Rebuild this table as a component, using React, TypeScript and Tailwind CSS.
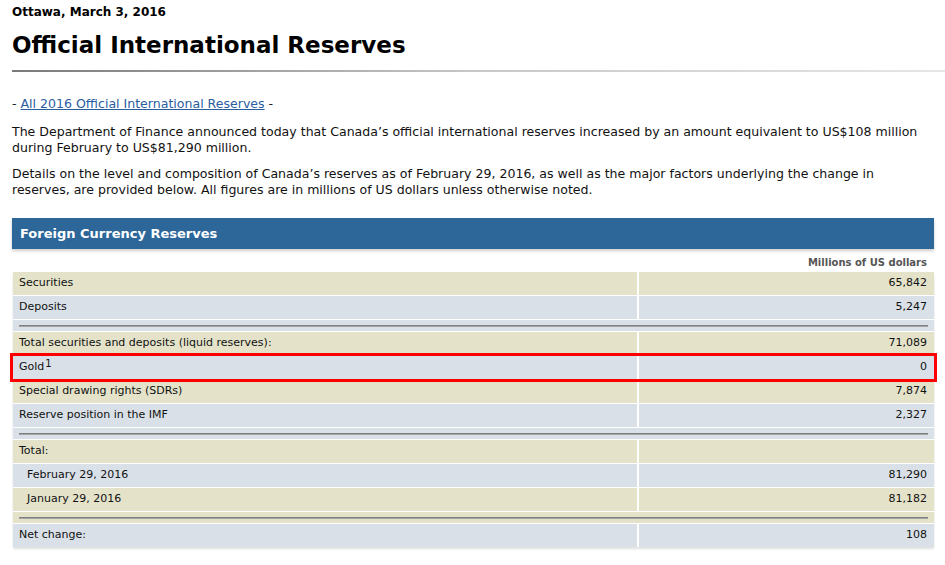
type Row = {
  label: React.ReactNode;
  value?: string;
  tone: 'olive' | 'blue';
  indent?: boolean;
  highlight?: boolean;
};

type Sep = { sep: true; tone: 'olive' | 'blue' };

const rows: (Row | Sep)[] = [
  { label: 'Securities', value: '65,842', tone: 'olive' },
  { label: 'Deposits', value: '5,247', tone: 'blue' },
  { sep: true, tone: 'blue' },
  { label: 'Total securities and deposits (liquid reserves):', value: '71,089', tone: 'olive' },
  {
    label: (
      <>
        Gold<sup className="relative -top-[4px] ml-px text-[10px]">1</sup>
      </>
    ),
    value: '0',
    tone: 'blue',
    highlight: true,
  },
  { label: 'Special drawing rights (SDRs)', value: '7,874', tone: 'olive' },
  { label: 'Reserve position in the IMF', value: '2,327', tone: 'blue' },
  { sep: true, tone: 'blue' },
  { label: 'Total:', value: '', tone: 'olive' },
  { label: 'February 29, 2016', value: '81,290', tone: 'blue', indent: true },
  { label: 'January 29, 2016', value: '81,182', tone: 'olive', indent: true },
  { sep: true, tone: 'olive' },
  { label: 'Net change:', value: '108', tone: 'blue' },
];

const toneClass = {
  olive: 'bg-[#e4e3ca]',
  blue: 'bg-[#d9e0e7]',
};

function TableRow({ row }: { row: Row | Sep }) {
  if ('sep' in row) {
    return (
      <div className={`flex h-[11px] items-center px-[6px] ${toneClass[row.tone]}`}>
        <div className="h-[2px] w-full bg-gradient-to-b from-[#6f6f6f] to-[#b5b5b5]" />
      </div>
    );
  }
  return (
    <div
      className={`flex h-[23px] gap-[2px] ${
        row.highlight ? 'relative z-10 outline-[3px] outline-[#f00] outline-solid' : ''
      }`}
    >
      <div
        className={`flex w-[624px] items-center ${row.indent ? 'pl-[14px]' : 'pl-[6px]'} ${toneClass[row.tone]}`}
      >
        {row.label}
      </div>
      <div className={`flex flex-1 items-center justify-end pr-[7px] ${toneClass[row.tone]}`}>
        {row.value}
      </div>
    </div>
  );
}

export default function App() {
  return (
    <div className="min-h-[565px] w-[945px] bg-white px-[12px] text-black [font-family:'DejaVu_Sans',Verdana,sans-serif]">
      <div className="pt-[4px] text-[12px] font-bold leading-[17px]">Ottawa, March 3, 2016</div>
      <h1 className="mt-[10px] text-[23px] font-bold leading-[28px]">Official International Reserves</h1>
      <div className="mt-[11px] -mr-[12px] h-[2px] bg-gradient-to-r from-[#7a7a7a] via-[#c8c8c8] to-[#e6e6e6]" />

      <div className="mt-[24px] text-[12.55px] leading-[16px] text-[#222]">
        -{' '}
        <a href="#" className="text-[#2a5d9f] underline">
          All 2016 Official International Reserves
        </a>{' '}
        -
      </div>

      <p className="mt-[12px] text-[12.55px] leading-[16px] text-[#111]">
        The Department of Finance announced today that Canada’s official international reserves increased by an amount
        equivalent to US$108 million during February to US$81,290 million.
      </p>
      <p className="mt-[10px] text-[12.55px] leading-[16px] text-[#111]">
        Details on the level and composition of Canada’s reserves as of February 29, 2016, as well as the major factors
        underlying the change in reserves, are provided below. All figures are in millions of US dollars unless otherwise
        noted.
      </p>

      <div className="mt-[20px] w-[922px]">
        <div className="flex h-[31px] items-center bg-[#2d6699] pl-[8px] text-[13px] font-bold text-white shadow-[0_2px_3px_rgba(0,0,0,0.2)]">
          Foreign Currency Reserves
        </div>
        <div className="flex h-[23px] items-center justify-end pt-[4px] pr-[7px] text-[10px] font-bold text-[#555]">
          Millions of US dollars
        </div>
        <div className="ml-px flex flex-col gap-px text-[11px] text-[#111] shadow-[0_2px_2px_rgba(0,0,0,0.12)]">
          {rows.map((r, i) => (
            <TableRow key={i} row={r} />
          ))}
        </div>
      </div>
    </div>
  );
}
